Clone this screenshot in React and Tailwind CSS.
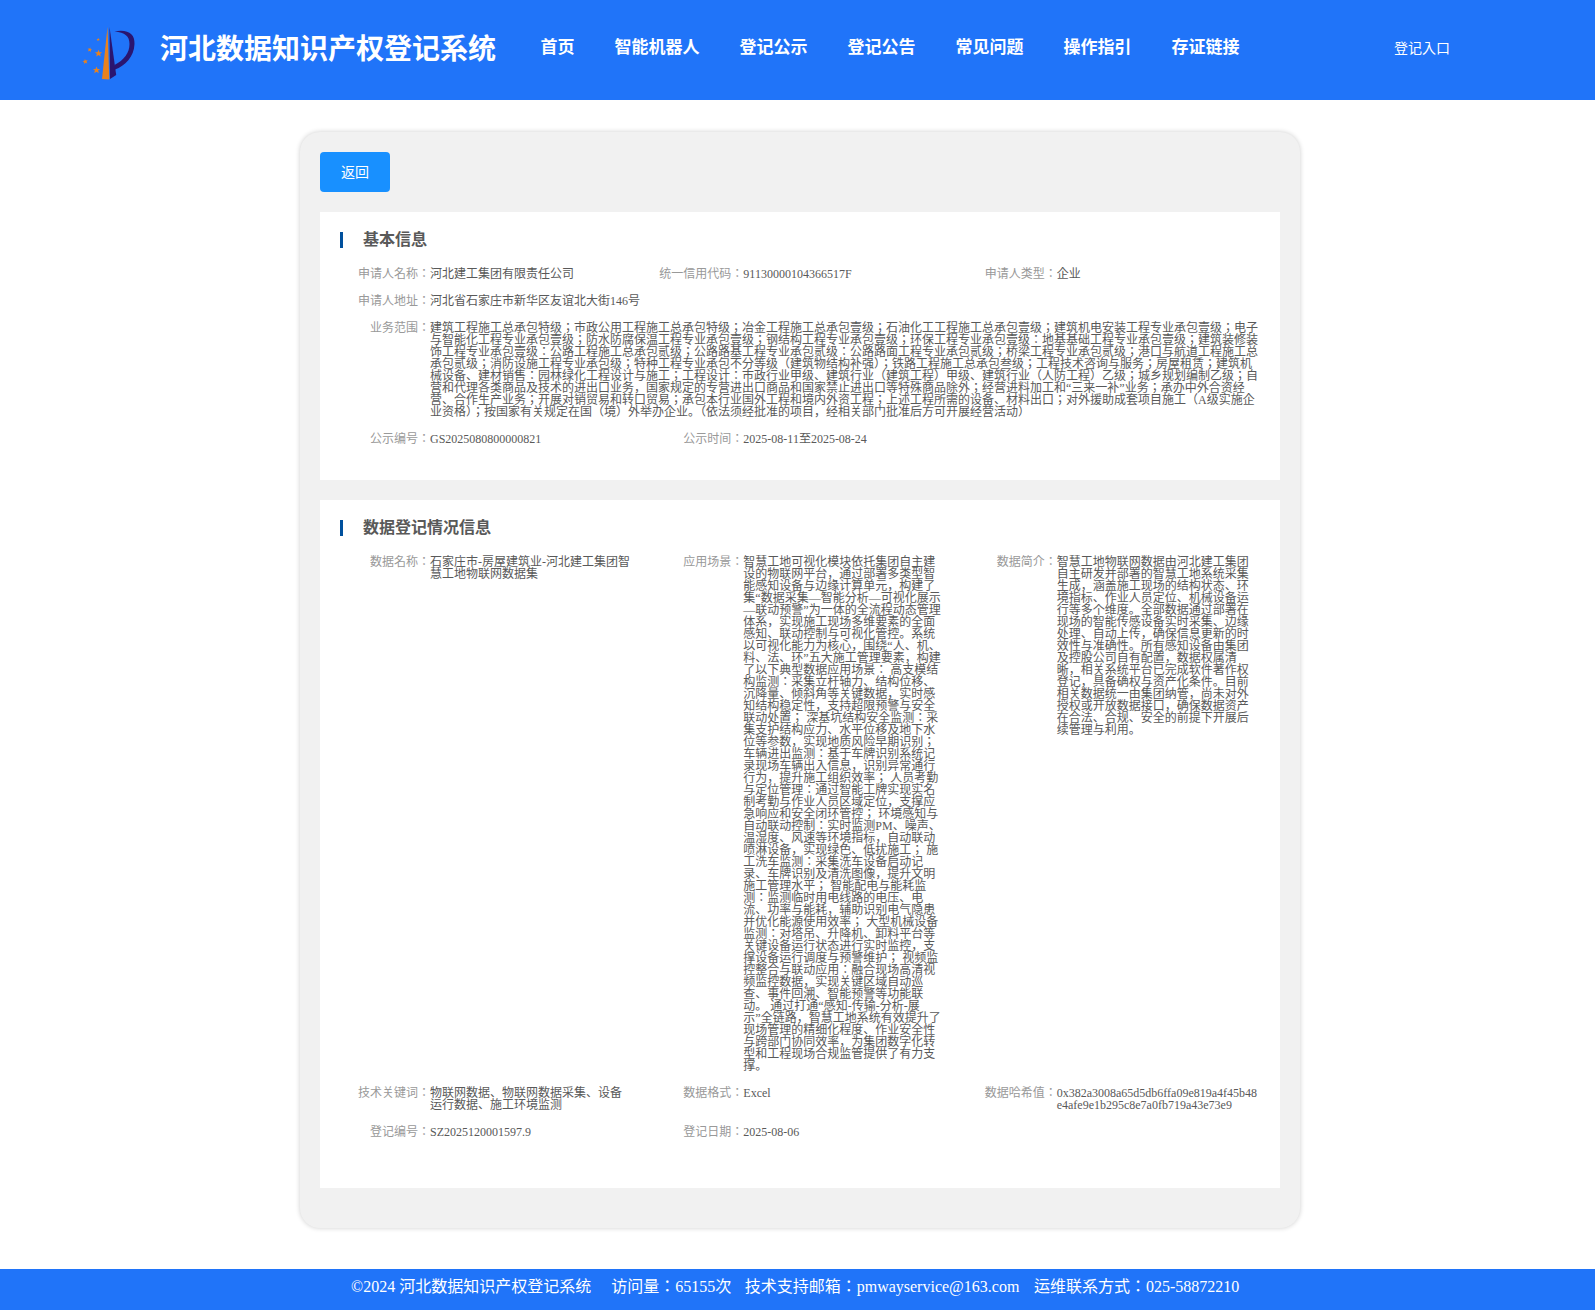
import clsx from 'clsx';

const navItems = ['首页', '智能机器人', '登记公示', '登记公告', '常见问题', '操作指引', '存证链接'];

const basicInfo = [
  { label: '申请人名称', value: '河北建工集团有限责任公司' },
  { label: '统一信用代码', value: '91130000104366517F' },
  { label: '申请人类型', value: '企业' },
  { label: '申请人地址', value: '河北省石家庄市新华区友谊北大街146号', full: true },
  {
    label: '业务范围',
    value:
      '建筑工程施工总承包特级；市政公用工程施工总承包特级；冶金工程施工总承包壹级；石油化工工程施工总承包壹级；建筑机电安装工程专业承包壹级；电子与智能化工程专业承包壹级；防水防腐保温工程专业承包壹级；钢结构工程专业承包壹级；环保工程专业承包壹级：地基基础工程专业承包壹级；建筑装修装饰工程专业承包壹级：公路工程施工总承包贰级；公路路基工程专业承包贰级：公路路面工程专业承包贰级；桥梁工程专业承包贰级；港口与航道工程施工总承包贰级；消防设施工程专业承包级；特种工程专业承包不分等级（建筑物结构补强）；铁路工程施工总承包叁级；工程技术咨询与服务；房屋租赁；建筑机械设备、建材销售：园林绿化工程设计与施工；工程设计：市政行业甲级、建筑行业（建筑工程）甲级、建筑行业（人防工程）乙级；城乡规划编制乙级；自营和代理各类商品及技术的进出口业务，国家规定的专营进出口商品和国家禁止进出口等特殊商品除外；经营进料加工和“三来一补”业务；承办中外合资经营、合作生产业务；开展对销贸易和转口贸易；承包本行业国外工程和境内外资工程；上述工程所需的设备、材料出口；对外援助成套项目施工（A级实施企业资格）；按国家有关规定在国（境）外举办企业。（依法须经批准的项目，经相关部门批准后方可开展经营活动）',
    full: true,
  },
  { label: '公示编号', value: 'GS2025080800000821' },
  { label: '公示时间', value: '2025-08-11至2025-08-24' },
];

const dataInfo = [
  { label: '数据名称', value: '石家庄市-房屋建筑业-河北建工集团智慧工地物联网数据集' },
  {
    label: '应用场景',
    value:
      '智慧工地可视化模块依托集团自主建设的物联网平台，通过部署多类型智能感知设备与边缘计算单元，构建了集“数据采集—智能分析—可视化展示—联动预警”为一体的全流程动态管理体系，实现施工现场多维要素的全面感知、联动控制与可视化管控。系统以可视化能力为核心，围绕“人、机、料、法、环”五大施工管理要素，构建了以下典型数据应用场景： 高支模结构监测：采集立杆轴力、结构位移、沉降量、倾斜角等关键数据，实时感知结构稳定性，支持超限预警与安全联动处置； 深基坑结构安全监测：采集支护结构应力、水平位移及地下水位等参数，实现地质风险早期识别； 车辆进出监测：基于车牌识别系统记录现场车辆出入信息，识别异常通行行为，提升施工组织效率； 人员考勤与定位管理：通过智能工牌实现实名制考勤与作业人员区域定位，支撑应急响应和安全闭环管控； 环境感知与自动联动控制：实时监测PM、噪声、温湿度、风速等环境指标，自动联动喷淋设备，实现绿色、低扰施工； 施工洗车监测：采集洗车设备启动记录、车牌识别及清洗图像，提升文明施工管理水平； 智能配电与能耗监测：监测临时用电线路的电压、电流、功率与能耗，辅助识别电气隐患并优化能源使用效率； 大型机械设备监测：对塔吊、升降机、卸料平台等关键设备运行状态进行实时监控，支撑设备运行调度与预警维护； 视频监控整合与联动应用：融合现场高清视频监控数据，实现关键区域自动巡查、事件回溯、智能预警等功能联动。 通过打通“感知-传输-分析-展示”全链路，智慧工地系统有效提升了现场管理的精细化程度、作业安全性与跨部门协同效率，为集团数字化转型和工程现场合规监管提供了有力支撑。',
  },
  {
    label: '数据简介',
    value:
      '智慧工地物联网数据由河北建工集团自主研发并部署的智慧工地系统采集生成，涵盖施工现场的结构状态、环境指标、作业人员定位、机械设备运行等多个维度。全部数据通过部署在现场的智能传感设备实时采集、边缘处理、自动上传，确保信息更新的时效性与准确性。所有感知设备由集团及控股公司自有配置，数据权属清晰，相关系统平台已完成软件著作权登记，具备确权与资产化条件。目前相关数据统一由集团纳管，尚未对外授权或开放数据接口，确保数据资产在合法、合规、安全的前提下开展后续管理与利用。',
  },
  { label: '技术关键词', value: '物联网数据、物联网数据采集、设备运行数据、施工环境监测' },
  { label: '数据格式', value: 'Excel' },
  { label: '数据哈希值', value: '0x382a3008a65d5db6ffa09e819a4f45b48e4afe9e1b295c8e7a0fb719a43e73e9', breakAll: true },
  { label: '登记编号', value: 'SZ2025120001597.9' },
  { label: '登记日期', value: '2025-08-06' },
];

const star = 'M0 -3.6L1 -1.1L3.6 -1L1.6 .6L2.3 3.2L0 1.7L-2.3 3.2L-1.6 .6L-3.6 -1L-1 -1.1Z';

function Logo() {
  return (
    <svg className="mt-2 w-16 h-16 shrink-0" viewBox="0 0 64 64" aria-hidden="true">
      <g fill="#e8821e">
        <path d="M29.5 5L31.3 57.5L24 57Z" />
        <path d={star} transform="translate(20.5 31.3)" />
        <path d={star} transform="translate(18.5 48)" />
        <path d={star} transform="translate(11.8 27.7) rotate(12) scale(.65)" />
        <path d={star} transform="translate(7.3 39.5) rotate(-10) scale(.72)" />
        <path d={star} transform="translate(20.2 17.5) scale(.48)" />
      </g>
      <g fill="#2a1570">
        <path d="M31.5 5L38.2 53L32 57Z" />
        <path d="M36.5 9.5C50 7 57 12 56.5 22C56 35 47 44 37 47.5L36.5 43C46 38 51.5 31 51.5 22C51.5 14 47 10.5 36.5 9.5Z" />
      </g>
    </svg>
  );
}

function Field({ label, value, full, breakAll }) {
  return (
    <div className={clsx('flex pr-5', full && 'col-span-3')}>
      <span className="w-[90px] shrink-0 text-right text-[#999]">{label}：</span>
      <span className={clsx('min-w-0 flex-1 text-[#595959]', breakAll && 'break-all')}>{value}</span>
    </div>
  );
}

function Panel({ title, fields, className }) {
  return (
    <section className={clsx('bg-white pt-5 pl-5', className)}>
      <h2 className="h-4 border-l-3 border-[#00509d] pl-5 text-base leading-4 font-bold text-[#595959]">{title}</h2>
      <div className="mt-5 grid grid-cols-3 gap-y-[15px] text-xs leading-3">
        {fields.map((field) => (
          <Field key={field.label} {...field} />
        ))}
      </div>
    </section>
  );
}

export default function App() {
  return (
    <div className="flex h-[1310px] flex-col bg-white font-['Liberation_Serif','Noto_Sans_CJK_JP',serif]">
      <header className="flex h-[100px] shrink-0 items-center bg-[#2074f9] pl-[78px] text-white">
        <Logo />
        <h1 className="ml-[18px] w-[380.5px] text-[28px] leading-8 font-bold">河北数据知识产权登记系统</h1>
        <nav className="flex gap-10 pb-1 text-[17px] leading-6 font-bold">
          {navItems.map((item) => (
            <a key={item} href="#">{item}</a>
          ))}
        </nav>
        <a href="#" className="mr-[145px] ml-auto pb-0.5 text-sm">登记入口</a>
      </header>

      <main className="mt-8 ml-[300px] h-[1096px] w-[1000px] shrink-0 rounded-[20px] bg-[#f1f1f1] p-5 shadow-[0_0_5px_rgba(0,0,0,0.2)]">
        <button className="block h-10 w-[70px] rounded bg-[#1890ff] pt-0.5 text-sm text-white">返回</button>
        <Panel title="基本信息" fields={basicInfo} className="mt-5 h-[268px]" />
        <Panel title="数据登记情况信息" fields={dataInfo} className="mt-5 h-[688px]" />
      </main>

      <footer className="mt-auto flex h-[41px] shrink-0 bg-[#2074f9] pt-1.5 pl-[351px] text-base leading-6 text-white">
        <span className="mr-5">©2024 河北数据知识产权登记系统</span>
        <span className="mr-[13.5px]">访问量：65155次</span>
        <span className="mr-[14.5px]">技术支持邮箱：pmwayservice@163.com</span>
        <span>运维联系方式：025-58872210</span>
      </footer>
    </div>
  );
}
